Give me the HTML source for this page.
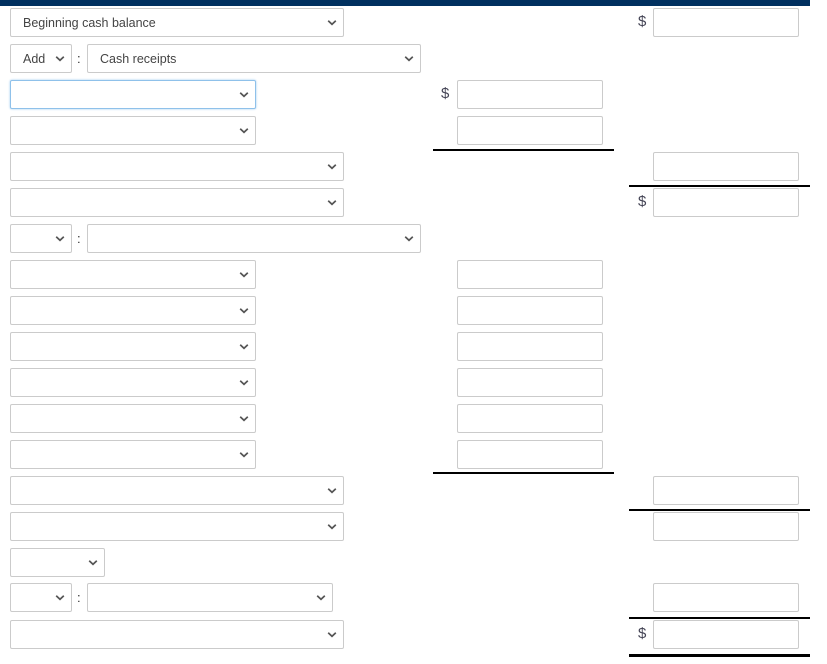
<!DOCTYPE html>
<html><head><style>
body{margin:0;width:827px;height:664px;background:#fff;position:relative;overflow:hidden;font-family:"Liberation Sans",sans-serif;}
.s,.b{position:absolute;box-sizing:border-box;border:1px solid #cbcbcb;border-radius:2px;background:#fff;height:29px;}
.s svg{position:absolute;right:6px;top:10px;}
.s span{position:absolute;left:12px;top:7px;font-size:12.5px;color:#444;}
.f{border-color:#8fc1ea;box-shadow:0 0 2px #9cc9ef;}
.l{position:absolute;height:1.5px;background:#000;}
.d{position:absolute;font-size:15px;color:#445;}
.c{position:absolute;font-size:13px;color:#333;}
</style></head><body>
<div style="position:absolute;left:0;top:0;width:810px;height:6px;background:#00305f"></div>
<svg width="0" height="0" style="position:absolute"><defs><symbol id="ch" viewBox="0 0 10 7"><path d="M1.2 1.8L5 5.3L8.8 1.8" stroke="#555" stroke-width="1.7" fill="none"/></symbol></defs></svg>

<div class="s" style="left:10px;top:8px;width:334px"><span>Beginning cash balance</span><svg width="10" height="7"><use href="#ch"/></svg></div>
<div class="d" style="left:638px;top:13px">$</div><div class="b" style="left:653px;top:8px;width:146px"></div>

<div class="s" style="left:10px;top:44px;width:62px"><span>Add</span><svg width="10" height="7"><use href="#ch"/></svg></div>
<div class="c" style="left:77px;top:51px">:</div>
<div class="s" style="left:87px;top:44px;width:334px"><span>Cash receipts</span><svg width="10" height="7"><use href="#ch"/></svg></div>

<div class="s f" style="left:10px;top:80px;width:246px"><svg width="10" height="7"><use href="#ch"/></svg></div>
<div class="d" style="left:441px;top:85px">$</div><div class="b" style="left:457px;top:80px;width:146px"></div>
<div class="s" style="left:10px;top:116px;width:246px"><svg width="10" height="7"><use href="#ch"/></svg></div>
<div class="b" style="left:457px;top:116px;width:146px"></div>
<div class="l" style="left:433px;top:149px;width:181px"></div>

<div class="s" style="left:10px;top:152px;width:334px"><svg width="10" height="7"><use href="#ch"/></svg></div>
<div class="b" style="left:653px;top:152px;width:146px"></div>
<div class="l" style="left:629px;top:185px;width:181px"></div>
<div class="s" style="left:10px;top:188px;width:334px"><svg width="10" height="7"><use href="#ch"/></svg></div>
<div class="d" style="left:638px;top:193px">$</div><div class="b" style="left:653px;top:188px;width:146px"></div>

<div class="s" style="left:10px;top:224px;width:62px"><svg width="10" height="7"><use href="#ch"/></svg></div>
<div class="c" style="left:77px;top:231px">:</div>
<div class="s" style="left:87px;top:224px;width:334px"><svg width="10" height="7"><use href="#ch"/></svg></div>

<div class="s" style="left:10px;top:260px;width:246px"><svg width="10" height="7"><use href="#ch"/></svg></div><div class="b" style="left:457px;top:260px;width:146px"></div>
<div class="s" style="left:10px;top:296px;width:246px"><svg width="10" height="7"><use href="#ch"/></svg></div><div class="b" style="left:457px;top:296px;width:146px"></div>
<div class="s" style="left:10px;top:332px;width:246px"><svg width="10" height="7"><use href="#ch"/></svg></div><div class="b" style="left:457px;top:332px;width:146px"></div>
<div class="s" style="left:10px;top:368px;width:246px"><svg width="10" height="7"><use href="#ch"/></svg></div><div class="b" style="left:457px;top:368px;width:146px"></div>
<div class="s" style="left:10px;top:404px;width:246px"><svg width="10" height="7"><use href="#ch"/></svg></div><div class="b" style="left:457px;top:404px;width:146px"></div>
<div class="s" style="left:10px;top:440px;width:246px"><svg width="10" height="7"><use href="#ch"/></svg></div><div class="b" style="left:457px;top:440px;width:146px"></div>
<div class="l" style="left:433px;top:472px;width:181px"></div>

<div class="s" style="left:10px;top:476px;width:334px"><svg width="10" height="7"><use href="#ch"/></svg></div>
<div class="b" style="left:653px;top:476px;width:146px"></div>
<div class="l" style="left:629px;top:509px;width:181px"></div>
<div class="s" style="left:10px;top:512px;width:334px"><svg width="10" height="7"><use href="#ch"/></svg></div>
<div class="b" style="left:653px;top:512px;width:146px"></div>

<div class="s" style="left:10px;top:548px;width:95px"><svg width="10" height="7"><use href="#ch"/></svg></div>

<div class="s" style="left:10px;top:583px;width:62px"><svg width="10" height="7"><use href="#ch"/></svg></div>
<div class="c" style="left:77px;top:590px">:</div>
<div class="s" style="left:87px;top:583px;width:246px"><svg width="10" height="7"><use href="#ch"/></svg></div>
<div class="b" style="left:653px;top:583px;width:146px"></div>
<div class="l" style="left:629px;top:617px;width:181px"></div>

<div class="s" style="left:10px;top:620px;width:334px"><svg width="10" height="7"><use href="#ch"/></svg></div>
<div class="d" style="left:638px;top:625px">$</div><div class="b" style="left:653px;top:620px;width:146px"></div>
<div class="l" style="left:629px;top:654px;width:181px;height:3px"></div>
</body></html>
